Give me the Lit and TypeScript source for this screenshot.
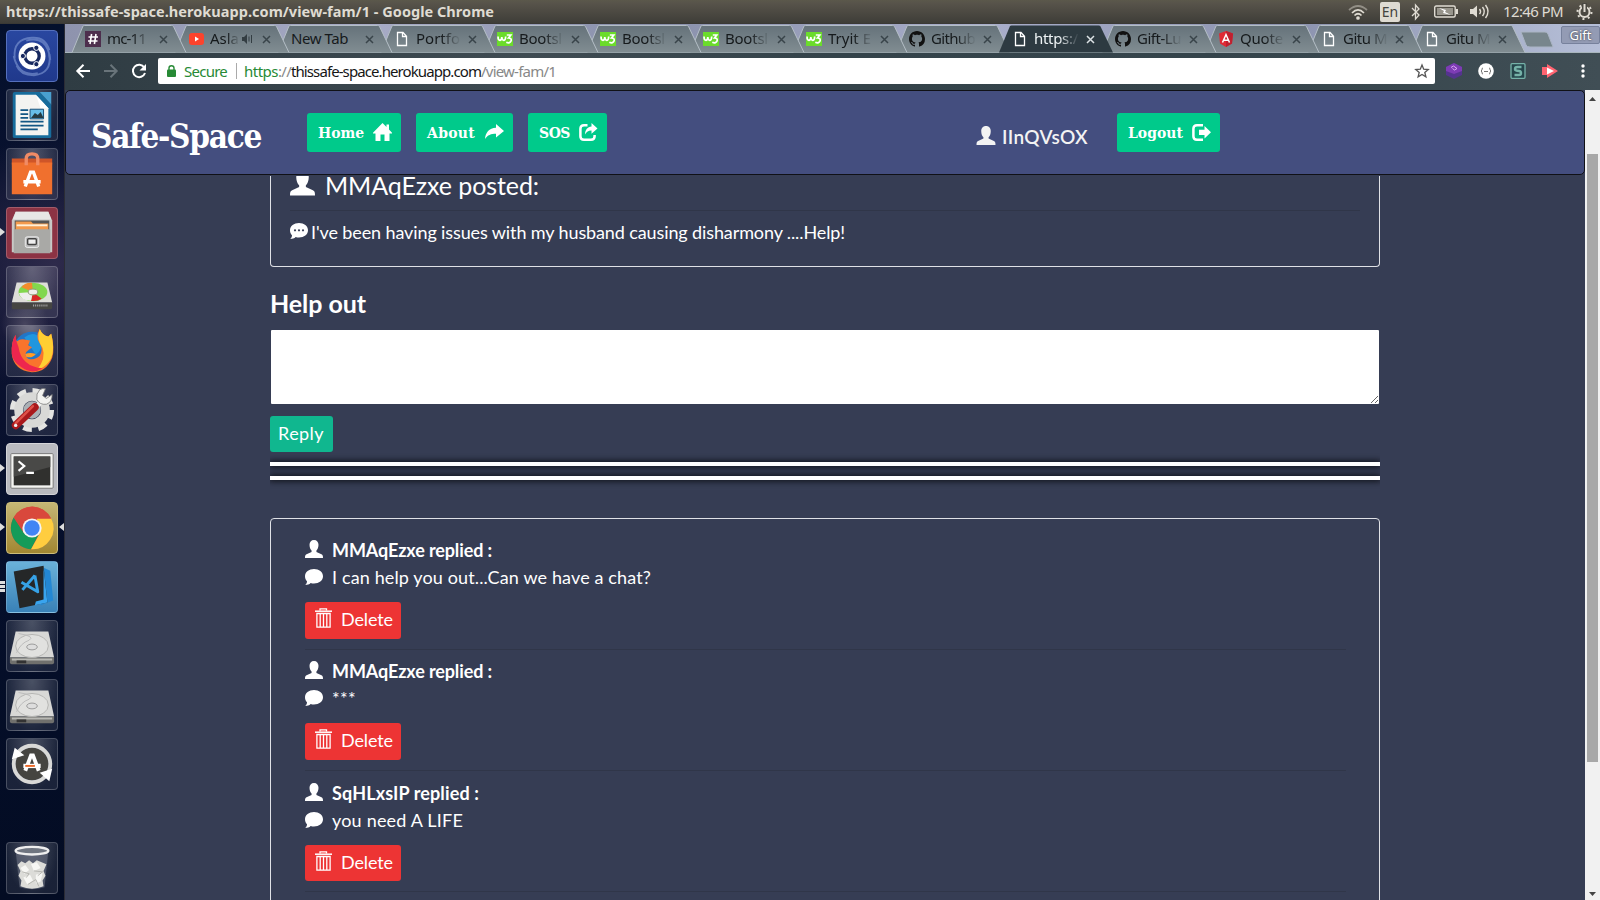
import { LitElement, html, css, svg, nothing } from "lit";
import { customElement, property } from "lit/decorators.js";
import { classMap } from "lit/directives/class-map.js";

/* Single line of text whose tracking is adjusted so that it spans `w` pixels. */
@customElement("fit-text")
class FitText extends LitElement {
  @property({ type: Number }) w = 0;
  static styles = css`
    :host { display: inline-block; white-space: pre; flex: none; }
    .run { display: inline-block; white-space: pre; }
  `;
  render() { return html`<span class="run"><slot></slot></span>`; }
  firstUpdated() {
    const run = this.renderRoot.querySelector(".run") as HTMLElement;
    const n = (this.textContent || "").length;
    const natural = run.getBoundingClientRect().width;
    if (this.w && n) {
      run.style.letterSpacing = `${(this.w - natural) / n}px`;
      this.style.width = `${this.w}px`;
    }
  }
}

const userPath = "M10 0C13.2 0 15 2.3 15 5.4C15 8.3 14 10.6 12.7 11.8V13.2L18.3 15.8C19.6 16.4 20 17.2 20 20H0C0 17.2.4 16.4 1.7 15.8L7.3 13.2V11.8C6 10.6 5 8.3 5 5.4C5 2.3 6.8 0 10 0Z";
const user = () => html`<svg class="i-user" viewBox="0 0 20 20"><path fill="currentColor" d=${userPath}></path></svg>`;
const bubble = (dots: boolean) => html`<svg class="i-bubble" viewBox="0 0 18 16"><path fill="currentColor" d="M9 0C14 0 18 3 18 7.3C18 11.6 14 14.5 9 14.5C7.8 14.5 6.7 14.4 5.700 14C4.300 15.400 2.300 15.900.3 15.900C1.500 14.900 2 13.700 2 12.300C.7 11 0 9.300 0 7.300C0 3 4 0 9 0Z"></path>${dots ? svg`<g fill="#363d54"><circle cx="5" cy="7.300" r="1.100"/><circle cx="9" cy="7.300" r="1.100"/><circle cx="13" cy="7.300" r="1.100"/></g>` : nothing}</svg>`;
const trash = () => html`<svg class="i-trash" viewBox="0 0 17 20"><g fill="none" stroke="currentColor"><path stroke-width="1.300" d="M5 2.500V.8H11.500V2.500"></path><path stroke-width="1.500" d="M0 3.200H17"></path><path stroke-width="1.300" d="M1.900 5.500H15.100V19.200H1.900ZM5.200 5.500V19M8.500 5.500V19M11.800 5.500V19"></path></g></svg>`;
const navIcon = (k: string) => {
  if (k === "home") return svg`<path fill="currentColor" d="M9.500 0L13.500 4V1.500H16V6.500L19 9.800V10.500H16.500V18H11.500V11.500H7.500V18H2.500V10.500H0V9.800Z"/>`;
  if (k === "arrow") return svg`<path fill="currentColor" d="M11 1L19 8L11 14.500V10.700C6 10.700 2.600 12 0 16C.6 9.500 4 5.200 11 4.800Z"/>`;
  if (k === "share") return svg`<path fill="none" stroke="currentColor" stroke-width="2.500" d="M8.500 2.300H5Q1.400 2.300 1.400 5.800V13.200Q1.400 16.700 5 16.700H12Q15.600 16.700 15.600 13.200V12"/><path fill="currentColor" d="M12.500 0L18.500 5.500L12.500 10.800V7.600C9.500 7.500 7.600 8.800 6 11.500C6.200 6.500 8.500 3.700 12.500 3.400Z"/>`;
  return svg`<path fill="none" stroke="currentColor" stroke-width="2.500" d="M11 2.300H5Q1.400 2.300 1.400 5.800V13.200Q1.400 16.700 5 16.700H11"/><path fill="currentColor" d="M12.500 3L19 9.300L12.500 15.500V12H7V6.700H12.500Z"/>`;
};

const octocat = "M8 0C3.580 0 0 3.580 0 8c0 3.540 2.290 6.530 5.470 7.590.4.070.55-.17.55-.38 0-.19-.01-.82-.01-1.490-2.010.37-2.530-.49-2.690-.94-.09-.23-.48-.94-.82-1.130-.28-.15-.68-.52-.01-.53.63-.01 1.080.58 1.230.82.72 1.210 1.870.87 2.330.66.07-.52.28-.87.51-1.070-1.780-.2-3.640-.89-3.640-3.950 0-.87.31-1.590.82-2.150-.08-.2-.36-1.020.08-2.120 0 0 .67-.21 2.200.82.64-.18 1.320-.27 2-.27s1.360.09 2 .27c1.530-1.040 2.200-.82 2.200-.82.44 1.100.16 1.920.08 2.120.51.56.82 1.270.82 2.150 0 3.070-1.870 3.750-3.650 3.950.29.25.54.73.54 1.480 0 1.070-.01 1.930-.01 2.200 0 .21.15.46.55.38A8.013 8.013 0 0 0 16 8c0-4.420-3.580-8-8-8z";
const favicon = (k: string) => {
  switch (k) {
    case "slack": return svg`<rect width="16" height="16" fill="#4d2f4d"/><path d="M6.600 3L5 13M11 3L9.400 13M3.500 6H13M3 10H12.500" stroke="#fff" stroke-width="1.600"/>`;
    case "yt": return svg`<rect x="1" y="2" width="15" height="12" rx="3" fill="#fd432c"/><path d="M7 5.500L11 8L7 10.500Z" fill="#fff"/>`;
    case "w3": return svg`<rect y="1" width="16" height="14" fill="#6bdc2b"/><path d="M1 5.500Q1 9.300 3 9.300Q4.800 9 4.800 6Q5 9.300 6.800 9.300Q8.700 9 8.700 5.500M9.800 4H13.800L11.500 7Q14.600 7 14.200 9.600Q13 12.800 9.300 11.300" fill="none" stroke="#fff" stroke-width="1.700"/>`;
    case "gh": return svg`<path fill="#111" d=${octocat} />`;
    case "ng": return svg`<path d="M8 0L15 2.500L14 12.500L8 16L2 12.500L1 2.500Z" fill="#e02a35"/><path d="M8 0L15 2.500L14 12.500L8 16Z" fill="#c0202f"/><path d="M4.500 11.500L8 3.500L11.500 11.500M5.800 9.300H10.200" fill="none" stroke="#fff" stroke-width="1.500"/>`;
    default: return svg`<path d="M3.500 1.500H9L12.500 5.200V14.500H3.500ZM8.500 1.500V5.500H12.500" fill="none" stroke="#fff" stroke-width="1.300"/>`;
  }
};

const tabs = [
  { icon: "slack", text: "mc-11", w: 39 }, { icon: "yt", text: "Asla", w: 29, sound: true },
  { icon: "", text: "New Tab", w: 57 }, { icon: "doc", text: "Portfo", w: 44 },
  { icon: "w3", text: "Bootsl", w: 43 }, { icon: "w3", text: "Bootsl", w: 43 }, { icon: "w3", text: "Bootsl", w: 43 },
  { icon: "w3", text: "Tryit E", w: 43 }, { icon: "gh", text: "Github", w: 44 },
  { icon: "doc", text: "https:/", w: 44, active: true }, { icon: "gh", text: "Gift-Lu", w: 44 },
  { icon: "ng", text: "Quote", w: 43 }, { icon: "doc", text: "Gitu M", w: 44 }, { icon: "doc", text: "Gitu M", w: 44 },
];

const drive = svg`<path d="M9 11H43L49 38H3Z" fill="#d8d8d6"/><path d="M3 38H49V43Q49 45 47 45H5Q3 45 3 43Z" fill="#70706d"/><path d="M5 39H47V41H5Z" fill="#b8b8b4"/><ellipse cx="26" cy="26" rx="17" ry="12" fill="#e1e1df" stroke="#b4b4b2"/><path d="M12 13Q30 16 23 20Q14 23 10 33" fill="none" stroke="#bbb"/><ellipse cx="26" cy="27" rx="5.500" ry="3" fill="#ddd" stroke="#999"/><path d="M10 41H20V44H10Z" fill="#333"/>`;
const launcher: { cls: string; run?: string; focus?: boolean; art: unknown }[] = [
  { cls: "dash", art: svg`<g fill="none" stroke="#8ba4dc" stroke-width="2" opacity=".55"><path d="M8 28Q6 8 26 7Q40 6 44 20"/><path d="M44 24Q47 44 28 46Q14 46 10 36"/><path d="M20 10Q42 4 45 30M32 44Q12 48 7 26"/></g><circle cx="26" cy="26" r="14" fill="#fff"/><circle cx="26" cy="26" r="7.500" fill="none" stroke="#17285f" stroke-width="3.500"/><g fill="#17285f" stroke="#fff" stroke-width="1"><circle cx="16.500" cy="26" r="2.700"/><circle cx="30.500" cy="17.500" r="2.700"/><circle cx="30.500" cy="34.500" r="2.700"/></g>` },
  { cls: "", art: svg`<path d="M8 2H34L46 15V48Q46 50 44 50H8Q6 50 6 48V4Q6 2 8 2Z" fill="#176c9c"/><path d="M34 2H46V15Z" fill="#49a0d0"/><path d="M9 5H30L43 19V47H9Z" fill="#f3f3f1"/><path d="M30 5V5L43 19H35Z" fill="#fff"/><path d="M14 21H22M14 25H22M14 29H22M14 33H38M14 37H38M14 41H32" stroke="#125684" stroke-width="1.800"/><path d="M24 20H38V30H24Z" fill="#67bde8" stroke="#174d76"/><path d="M25 29L29 24L32 26L35 23L38 29Z" fill="#263a42"/>` },
  { cls: "", art: svg`<path d="M5 10H47V16H5Z" fill="#cf5528"/><path d="M5 14H47V47H5Z" fill="#f0702e"/><path d="M20 17V10Q20 5 26 5Q32 5 32 10V17" fill="none" stroke="#f08b65" stroke-width="3.500"/><path d="M19 39L24.500 24H27.500L33 39M17 34H35" fill="none" stroke="#fff" stroke-width="3.500"/>` },
  { cls: "files", run: "▶", art: svg`<path d="M9 4H43L47 13V46H5V13Z" fill="#c8c8c6"/><path d="M9 4H43L46 12H6Z" fill="#e7e7e5"/><path d="M8 13H44V23H8Z" fill="#555"/><path d="M9 14H25L27 16H43V23H9Z" fill="#f29a4d"/><path d="M10 17H42V19H10Z" fill="#fff0d8"/><path d="M7 22H45V47H7Z" fill="#a9a9a6"/><rect x="19" y="30" width="14" height="11" rx="2" fill="#bbb" stroke="#eee"/><rect x="21.500" y="32" width="9" height="6" rx="1" fill="#eee" stroke="#444" stroke-width="1.500"/>` },
  { cls: "", art: svg`<path d="M10 16H42L47 37H5Z" fill="#deded9"/><path d="M5 37H47V42Q47 44 45 44H7Q5 44 5 42Z" fill="#454542"/><ellipse cx="27" cy="26" rx="15" ry="9.500" fill="#82d74e"/><path d="M27 26L15 21Q19 16 26 16.500Z" fill="#f38b2c"/><path d="M27 26L36 33Q32 36 25 35.300Z" fill="#d92827"/><path d="M27 26L25 35Q14 35 12.500 27Z" fill="#eee"/><ellipse cx="27" cy="26" rx="5" ry="3" fill="#efefea" stroke="#8a9a75"/><path d="M27 40H43" stroke="#aaa" stroke-width="2" stroke-dasharray="1 1"/>` },
  { cls: "", art: svg`<circle cx="26" cy="26" r="20" fill="#2176c8"/><path d="M18 12Q27 4 36 13Q38 24 30 30Z" fill="#2096df"/><path d="M9 9Q8 13 10 16Q14 13 18 14L24 15L22 20L26 22L20 27Q18 31 22 34Q29 36 34 31Q38 25 34 18Q29 11 34 3Q37 10 43 11L46 8Q50 24 47 33Q41 48 26 48Q7 46 5 29Q4 17 9 9Z" fill="#f9742d"/><path d="M34 3Q37 10 43 11L46 8Q51 29 43 38Q39 43 31 46Q41 34 37 23Q30 13 34 3Z" fill="#ffcf32"/><path d="M5 29Q4 17 9 9Q9 16 12 22Q15 42 37 44Q26 51 15 43Q6 37 5 29Z" fill="#ee264e"/><path d="M19 29Q24 27 30 29Q26 34 20 32Z" fill="#ff9d27"/>` },
  { cls: "", art: svg`<circle cx="26" cy="26" r="20" fill="none" stroke="#e4e4e2" stroke-width="6" stroke-dasharray="9 6.700"/><circle cx="26" cy="26" r="14" fill="none" stroke="#d9d9d7" stroke-width="9"/><circle cx="26" cy="26" r="9" fill="#abb0b5"/><path d="M28 25L36 17" stroke="#f2f2f0" stroke-width="5"/><path d="M34 5Q30 9 31 15Q34 21 41 20Q47 18 47 10L41 14L37 11L40 4Q37 3 34 5Z" fill="#f2f2f0" stroke="#777" stroke-width=".8"/><path d="M9 42L29 23" stroke="#a9181c" stroke-width="8" stroke-linecap="round"/><path d="M9 40L27 22" stroke="#de5048" stroke-width="2.500" stroke-linecap="round"/><circle cx="9" cy="42" r="1.800" fill="#eee"/>` },
  { cls: "term", run: "▶", art: svg`<rect x="4" y="10" width="44" height="36" rx="1" fill="#f4f4f1" stroke="#777"/><rect x="7" y="13" width="38" height="30" fill="#30302e"/><path d="M7 13H45V24L7 34Z" fill="#494947"/><path d="M12 18L18 23L12 28M20 30H28" fill="none" stroke="#fff" stroke-width="2.200"/>` },
  { cls: "chrome", run: "▶", focus: true, art: svg`<circle cx="26" cy="26" r="22" fill="#d84a3d"/><path d="M7 15A22 22 0 0 0 25 48L34 31L18 31Z" fill="#159b59"/><path d="M46 16A22 22 0 0 1 25 48L35 30L31 16Z" fill="#ffcd3f"/><path d="M7 15L18 32L18 21L26 16H46A22 22 0 0 0 7 15Z" fill="#d9483c"/><circle cx="26" cy="26" r="10" fill="#f4f4f4"/><circle cx="26" cy="26" r="8" fill="#4285f4"/>` },
  { cls: "code", run: "≡", art: svg`<path d="M38 6L45 9L48 40L35 45Z" fill="#2387d3"/><path d="M7 10L38 4L42 42L13 48Z" fill="#252728"/><path d="M38 6L42 42L29 45L30 41L38 39Z" fill="#39a4ee"/><path d="M29 14L32 31L15 21M29 14L16 29" stroke="#36a2e6" stroke-width="3" fill="none" stroke-linejoin="round"/>` },
  { cls: "", art: drive }, { cls: "", art: drive },
  { cls: "", art: svg`<circle cx="26" cy="26" r="17" fill="#454440"/><circle cx="26" cy="26" r="19" fill="none" stroke="#d9d9d7" stroke-width="4"/><path d="M5 21L8 9L18 17ZM47 31L44 44L34 35Z" fill="#fff"/><path d="M19 33L25 17H27L33 33" fill="none" stroke="#fff" stroke-width="4"/><path d="M17 28H35" stroke="#fff" stroke-width="4.500"/><path d="M19 28H29" stroke="#ee6a28" stroke-width="2"/>` },
  { cls: "bin", art: svg`<path d="M9 8L13 46Q26 50 39 46L43 8Z" fill="#8c92a0" opacity=".4"/><path d="M11 23L15 19L19 21L23 18L27 21L31 18L36 20L41 22L38 29L40 34L37 39L38 45Q26 50 14 45L15 39L12 34L14 29Z" fill="#dcdcd8"/><path d="M14 26L19 23L23 28L18 32ZM25 22L31 20L35 26L28 29ZM17 36L24 33L27 39L21 43ZM30 33L37 31L35 40L30 42Z" fill="#f7f7f4"/><path d="M16 30L23 32L20 36M28 29L37 30L32 34M22 43L30 38L33 45" fill="none" stroke="#b5b5b0"/><ellipse cx="26" cy="8" rx="17" ry="4" fill="#6f7580" stroke="#eee" stroke-width="2.500"/>` },
];

const replies = [
  { name: "MMAqEzxe replied :", nw: 160, text: "I can help you out...Can we have a chat?", tw: 319 },
  { name: "MMAqEzxe replied :", nw: 160, text: "***", tw: 24 },
  { name: "SqHLxsIP replied :", nw: 147, text: "you need A LIFE", tw: 131 },
];

@customElement("app-root")
class AppRoot extends LitElement {
  static styles = css`
    :host { display: block; width: 1600px; height: 900px; overflow: hidden; font-family: "Noto Sans", sans-serif; }
    * { box-sizing: border-box; }
    svg { display: block; flex: none; overflow: visible; }
    .screen { display: grid; grid-template: 24px 876px / 65px 1535px; width: 1600px; height: 900px; }
    .top { grid-column: 1 / 3; display: flex; align-items: center; justify-content: space-between; padding: 0 7px 0 6px; background: linear-gradient(#5b584b, #57534a 15%, #3e3d38); color: #dfdbd2; border-bottom: 1px solid #3a3935; }
    .title { font: 700 14.500px/22px "Noto Sans"; margin-top: -1px; }
    .tray { display: flex; align-items: center; height: 24px; font-size: 15px; }
    .lang { width: 20px; height: 20px; background: #dfdbd2; border-radius: 2px; color: #45433e; font: 14px/20px "Noto Sans"; text-align: center; margin: 0 11px 0 12px; }
    .bt { margin-right: 14px; }
    .bat { margin-right: 12px; }
    .clock { margin: -1px 13px 0 13px; }
    .launcher { position: relative; display: flex; flex-direction: column; gap: 7px; padding: 6px 0 6px 6px; height: 876px; border-right: 1px solid #2b2c35;
      background: radial-gradient(circle at 25px 300px, #47455e 0, transparent 24px), radial-gradient(circle at 55px 240px, #2e2a4b, transparent 130px), linear-gradient(#04102c, #0c1230 35%, #050f2b 60%, #030c23); }
    .tile { position: relative; width: 52px; height: 52px; flex: none; border-radius: 4px; border: 1px solid #ffffff33; background: radial-gradient(ellipse at 50% 0, #ffffff48, #ffffff18 75%); }
    .tile svg { width: 50px; height: 50px; }
    .tile.dash { background: linear-gradient(#2947a0, #20398c); border-color: #5570bd; }
    .tile.files { background: #8c3344; }
    .tile.term { background: #b9babf; border-color: #d4d4d8; }
    .tile.chrome { background: linear-gradient(#c5b675, #a18732); border-color: #cdbd79; }
    .tile.code { background: linear-gradient(#6ab1d9, #3981b7); }
    .bin { margin-top: auto; }
    .pip { position: absolute; left: -7px; top: 20px; width: 0; height: 0; border: 4.500px solid transparent; border-left: 5px solid #ddd; border-right: 0; }
    .pips { position: absolute; left: -7px; top: 19px; width: 5px; height: 11px; background: repeating-linear-gradient(#ddd 0 3px, transparent 3px 4px); }
    .here { position: absolute; right: -7px; top: 20px; border: 4.500px solid transparent; border-right: 5px solid #ddd; border-left: 0; }
    .browser { display: grid; grid-template-rows: 29px 37px 810px; min-width: 0; }
    .strip { display: flex; position: relative; padding: 1px 0 0 20px; background: linear-gradient(90deg, #8e93ad, #a7abc6 20%, #8990ab 38%, #a9aecb 60%, #8c93af 80%, #b6bfd8); border-bottom: 1px solid #a9b6bd; }
    .tab { position: relative; display: flex; align-items: center; width: 103px; height: 27px; flex: none; color: #161a1c; font-size: 15px; }
    .tab.active { color: #eef3f5; z-index: 20; }
    .shape { position: absolute; left: -13px; top: 0; }
    .fav { position: relative; width: 16px; height: 16px; margin-right: 6px; }
    .label { position: relative; width: 45px; overflow: hidden; white-space: nowrap; line-height: 27px; -webkit-mask-image: linear-gradient(90deg, #000 55%, transparent 100%); }
    .label.wide { width: 65px; -webkit-mask-image: none; }
    .label.short { width: 30px; }
    .snd { position: relative; margin-left: 2px; }
    .x { position: absolute; left: 74px; top: 10px; }
    .newtab { position: relative; margin: 6px 0 0 -7px; }
    .gift { margin: 1px 0 0 auto; width: 39px; height: 18px; border: 1px solid #77819c; border-radius: 2px; background: #939bb4; color: #fff; font: 13px/16px "Noto Sans"; text-align: center; text-shadow: 0 0 2px #222; }
    .bar { display: flex; align-items: center; padding: 0 0 1px 11px; background: linear-gradient(90deg, #2f3c43, #3f4b52 30%, #34434a 50%, #35444b 75%, #404e55); }
    .back { margin-right: 14px; }
    .fwd { margin-right: 14px; }
    .url { display: flex; align-items: center; width: 1277px; height: 26px; margin-left: 11px; padding: 0 6px 0 9px; border-radius: 2px; background: #fff; font: 15px/24px "Noto Sans"; color: #888; white-space: pre; }
    .secure { color: #278a35; margin-left: 8px; }
    .scheme { color: #278a35; }
    .vr { width: 1px; height: 16px; background: #aaa; margin: 0 7px 0 9px; }
    .host { color: #161616; }
    .star { margin-left: auto; }
    .ext { display: flex; align-items: center; gap: 16px; margin-left: 11px; }
    .more { margin-left: 7px; }
    .page { display: grid; grid-template: 86px 724px / 1520px 15px; background: #363d54; color: #fff; }
    .nav { display: flex; align-items: flex-start; width: 1520px; height: 85px; background: #444e7f; border: 1px solid #101116; border-radius: 5px; padding-left: 25px; }
    .brand { font: 700 33px/40px "DejaVu Serif Condensed", "DejaVu Serif", serif; margin: 26px 46px 0 0; }
    .brand, .btn { color: #fff; }
    .btn { display: flex; align-items: center; justify-content: space-between; height: 39px; border-radius: 3px; background: #00ca8b; padding: 0 9px 2px 11px; margin: 22px 15px 0 0; font: 700 15.500px/39px "DejaVu Serif Condensed", "DejaVu Serif", serif; }
    .btn fit-text { margin-top: 2px; }
    .b-home { width: 94px; } .b-about { width: 97px; } .b-sos { width: 79px; } .b-out { width: 103px; margin-right: 0; }
    .who { display: flex; align-items: center; margin: 32px 29px 0 354px; gap: 6px; font: 600 19px/28px Lato; color: #f3f3f3; }
    .who .i-user { width: 20px; height: 19px; margin-bottom: 3px; }
    .side { grid-row: 1 / 3; grid-column: 2; background: #f1f1f1; display: flex; flex-direction: column; align-items: center; justify-content: space-between; padding: 7px 1px 4px 1px; }
    .thumb { width: 11px; height: 608px; background: #a8a8a8; margin: -77px 0 0 0; }
    .content { width: 1110px; height: 724px; margin-left: 205px; overflow: hidden; font-family: Lato, sans-serif; }
    .post { height: 91px; border: 1px solid #dfe1e6; border-top: 0; border-radius: 0 0 4px 4px; padding: 0 19px; }
    .phead { display: flex; height: 35px; gap: 10px; border-bottom: 1px solid #303649; overflow: hidden; font-size: 25px; line-height: 30px; margin-bottom: 10px; }
    .phead fit-text { margin-top: -6px; }
    .phead .i-user { width: 25px; height: 26px; margin-top: -6px; }
    .pbody { display: flex; gap: 3px; font-size: 18px; line-height: 22px; }
    .pbody .i-bubble { margin-top: 2px; }
    .i-bubble { width: 18px; height: 16px; }
    .help { font: 700 25px/30px Lato; margin-top: 21px; height: 42px; }
    .area { display: block; width: 1108px; height: 74px; margin: 0 1px; background: #fff; border: 0; border-radius: 1px; padding: 0; resize: vertical; outline: 0; }
    .reply { width: 63px; height: 36px; margin: 12px 0 10px; border-radius: 3px; background: #10b78f; font-size: 18px; line-height: 34px; padding-left: 8px; }
    .rule { height: 4px; background: #fff; box-shadow: 0 0 6px 1px #0b0d12; margin-bottom: 10px; }
    .list { height: 420px; margin-top: 38px; border: 1px solid #dfe1e6; border-radius: 4px; padding: 21px 33px 0 34px; }
    .item { height: 121.400px; }
    .line { display: flex; align-items: flex-start; gap: 9px; height: 27px; font-size: 18px; line-height: 20px; }
    .line .i-user { width: 18px; height: 18px; }
    .line .i-bubble { margin-top: 2px; }
    .bold { font-weight: 700; }
    .del { display: flex; width: 96px; height: 36.500px; margin: 8px 0 10px; background: #ed3434; border-radius: 3px; padding: 6px 0 0 10px; gap: 9px; font-size: 18px; line-height: 23px; }
    .i-trash { width: 17px; height: 20px; }
    .sep { height: 1px; background: #303649; }
  `;

  tab(t: any, i: number) {
    const fill = t.active ? "#2d3a41" : "url(#tg)";
    return html`<div class=${classMap({ tab: true, active: !!t.active })} style=${t.active ? "" : `z-index:${15 - i}`}>
      <svg class="shape" width="114" height="28"><defs><linearGradient id="tg" x2="0" y2="1"><stop stop-color="#65727a"></stop><stop offset="1" stop-color="#818d92"></stop></linearGradient></defs>
        <path d="M0 27.500L11 1Q11.500 .5 12.500 .5H99.500Q101 .5 101.500 1.500L114 27.500" fill=${fill} stroke=${t.active ? "none" : "#b4bec6"}></path></svg>
      ${t.icon ? html`<svg class="fav" viewBox="0 0 16 16">${favicon(t.icon)}</svg>` : nothing}
      <span class=${classMap({ label: true, wide: !t.icon, short: !!t.sound })}><fit-text .w=${t.w}>${t.text}</fit-text></span>
      ${t.sound ? html`<svg class="snd" width="11" height="10"><path d="M0 3H2L5 0V10L2 7H0Z" fill="#333d42"></path><path d="M7 2.500V7.500M9.500 1V9" stroke="#333d42"></path></svg>` : nothing}
      <svg class="x" width="9" height="9"><path d="M1 1L8 8M8 1L1 8" stroke=${t.active ? "#dce2e5" : "#39444a"} stroke-width="1.500"></path></svg>
    </div>`;
  }

  btn(cls: string, label: string, w: number, icon: string) {
    return html`<div class="btn ${cls}"><fit-text .w=${w}>${label}</fit-text><svg width="19" height="18" viewBox="0 0 19 18">${navIcon(icon)}</svg></div>`;
  }

  render() {
    return html`<div class="screen">
      <header class="top">
        <fit-text class="title" .w=${488}>https://thissafe-space.herokuapp.com/view-fam/1 - Google Chrome</fit-text>
        <div class="tray">
          <svg width="20" height="14" fill="none" stroke="#dfdbd2" stroke-width="1.700"><path d="M1 5Q10-3 19 5" opacity=".45"></path><path d="M4 8Q10 2 16 8M6.500 10.500Q10 7 13.500 10.500"></path><circle cx="10" cy="13" r="1" fill="#dfdbd2"></circle></svg>
          <span class="lang">En</span>
          <svg class="bt" width="9" height="16" fill="none" stroke="#dfdbd2" stroke-width="1.300"><path d="M1 4L8 11L4.500 15V1L8 5L1 12"></path></svg>
          <svg class="bat" width="24" height="13"><rect x=".7" y="1" width="20.500" height="11" rx="1.500" fill="none" stroke="#dfdbd2" stroke-width="1.400"></rect><rect x="3" y="3" width="16" height="7" fill="#98958c"></rect><path d="M22 4H24V9H22Z" fill="#dfdbd2"></path><path d="M5 3L12 5L11 7L17 10L9 8L10 6Z" fill="#fff"></path></svg>
          <svg width="20" height="15" fill="none" stroke="#dfdbd2" stroke-width="1.500"><path d="M0 5H3L7 1.500V13.500L3 10H0Z" fill="#dfdbd2" stroke="none"></path><path d="M9.500 5Q11.500 7.500 9.500 10M12.500 3Q16 7.500 12.500 12M15.500 1Q20.500 7.500 15.500 14"></path></svg>
          <fit-text class="clock" .w=${60}>12:46 PM</fit-text>
          <svg width="17" height="17" fill="none" stroke="#dfdbd2"><circle cx="8.500" cy="9" r="5" stroke-width="2"></circle><circle cx="8.500" cy="9" r="7" stroke-width="2" stroke-dasharray="2 3.500"></circle><path d="M8.500 0V9" stroke="#4a4842" stroke-width="5"></path><path d="M8.500 1V9" stroke-width="2"></path></svg>
        </div>
      </header>
      <aside class="launcher">
        ${launcher.map((l) => html`<div class="tile ${l.cls}"><svg viewBox="0 0 52 52">${l.art}</svg>
          ${l.run === "▶" ? html`<i class="pip"></i>` : l.run ? html`<i class="pips"></i>` : nothing}${l.focus ? html`<i class="here"></i>` : nothing}</div>`)}
      </aside>
      <section class="browser">
        <div class="strip">${tabs.map((t, i) => this.tab(t, i))}
          <svg class="newtab" width="34" height="17"><path d="M1 1H25Q27 1 28 3L33 16H10Q7 16 6 14Z" fill="#78868d" stroke="#aab4c4"></path></svg>
          <div class="gift">Gift</div></div>
        <div class="bar">
          <svg class="back" width="14" height="14" fill="none" stroke="#fff" stroke-width="2"><path d="M14 7H1.500M7.500 .8L1.300 7L7.500 13.200"></path></svg>
          <svg class="fwd" width="14" height="14" fill="none" stroke="#69747a" stroke-width="2"><path d="M0 7H12.500M6.500 .8L12.700 7L6.500 13.200"></path></svg>
          <svg width="15" height="15" fill="none" stroke="#fff" stroke-width="2"><path d="M12.300 3.500A6.200 6.200 0 1 0 13 9"></path><path d="M14 0V6.500H7.500Z" fill="#fff" stroke="none"></path></svg>
          <div class="url">
            <svg width="9" height="12"><rect y="4.500" width="9" height="7.500" rx="1" fill="#278a35"></rect><path d="M2 5V3Q2 .8 4.500 .8Q7 .8 7 3V5" fill="none" stroke="#278a35" stroke-width="1.400"></path></svg>
            <fit-text class="secure" .w=${43}>Secure</fit-text><i class="vr"></i><fit-text class="scheme" .w=${34}>https</fit-text><fit-text .w=${13}>://</fit-text><fit-text class="host" .w=${190}>thissafe-space.herokuapp.com</fit-text><fit-text .w=${75}>/view-fam/1</fit-text>
            <svg class="star" width="14" height="14" viewBox="0 0 14 14"><path d="M7 1L8.700 5.200L13.200 5.500L9.800 8.400L10.900 12.800L7 10.400L3.100 12.800L4.200 8.400L.8 5.500L5.300 5.200Z" fill="none" stroke="#555" stroke-width="1.300"></path></svg>
          </div>
          <div class="ext">
            <svg width="16" height="16"><path d="M8 0L16 4V12L8 16L0 12V4Z" fill="#55338f"></path><path d="M8 0L16 4V8L8 11L0 8V4Z" fill="#7d3cb4"></path><path d="M5 4.500L7.500 3L11 5.500L8.500 7L6.500 5.500" fill="none" stroke="#e0a8f8"></path></svg>
            <svg width="16" height="16"><circle cx="8" cy="8" r="7.800" fill="#fff"></circle><path d="M5 5Q3.500 5 4 7L3 8L4 9Q3.500 11 5 11M11 5Q12.500 5 12 7L13 8L12 9Q12.500 11 11 11M6 8.500H10" fill="none" stroke="#777"></path></svg>
            <svg width="16" height="16"><rect x="1" y=".7" width="14" height="14.600" rx="1" fill="#25454b" stroke="#75b2a8" stroke-width="1.300"></rect><path d="M11.500 4H7.500Q5 4 5 6Q5 7.500 7 7.700L9 8Q11 8.300 11 10Q11 12 9 12H4.500" fill="none" stroke="#75b2a8" stroke-width="2.400"></path></svg>
            <svg width="16" height="14"><path d="M0 3H5V0L16 7L5 14V11H0Z" fill="#ff6471"></path><path d="M5 3.500L12 7L5 10.500Z" fill="#fff"></path></svg>
            <svg class="more" width="4" height="14" fill="#fff"><circle cx="2" cy="2" r="1.700"></circle><circle cx="2" cy="7" r="1.700"></circle><circle cx="2" cy="12" r="1.700"></circle></svg>
          </div>
        </div>
        <div class="page">
          <nav class="nav">
            <fit-text class="brand" .w=${170}>Safe-Space</fit-text>
            ${this.btn("b-home", "Home", 46, "home")}${this.btn("b-about", "About", 48, "arrow")}${this.btn("b-sos", "SOS", 31, "share")}
            <div class="who">${user()}<fit-text .w=${86}>IInQVsOX</fit-text></div>
            ${this.btn("b-out", "Logout", 55, "out")}
          </nav>
          <div class="side"><svg width="7" height="4"><path d="M3.500 0L7 4H0Z" fill="#444"></path></svg><div class="thumb"></div><svg width="7" height="4"><path d="M0 0H7L3.500 4Z" fill="#444"></path></svg></div>
          <main class="content">
            <div class="post">
              <div class="phead">${user()}<fit-text .w=${214}>MMAqEzxe posted:</fit-text></div>
              <div class="pbody">${bubble(true)}<fit-text .w=${534}>I've been having issues with my husband causing disharmony ....Help!</fit-text></div>
            </div>
            <div class="help"><fit-text .w=${96}>Help out</fit-text></div>
            <textarea class="area"></textarea>
            <div class="reply"><fit-text .w=${46}>Reply</fit-text></div>
            <div class="rule"></div><div class="rule"></div>
            <div class="list">
              ${replies.map((r) => html`<div class="item">
                <div class="line bold">${user()}<fit-text .w=${r.nw}>${r.name}</fit-text></div>
                <div class="line">${bubble(false)}<fit-text .w=${r.tw}>${r.text}</fit-text></div>
                <div class="del">${trash()}<fit-text .w=${52}>Delete</fit-text></div>
                <div class="sep"></div></div>`)}
            </div>
          </main>
        </div>
      </section>
    </div>`;
  }
}
